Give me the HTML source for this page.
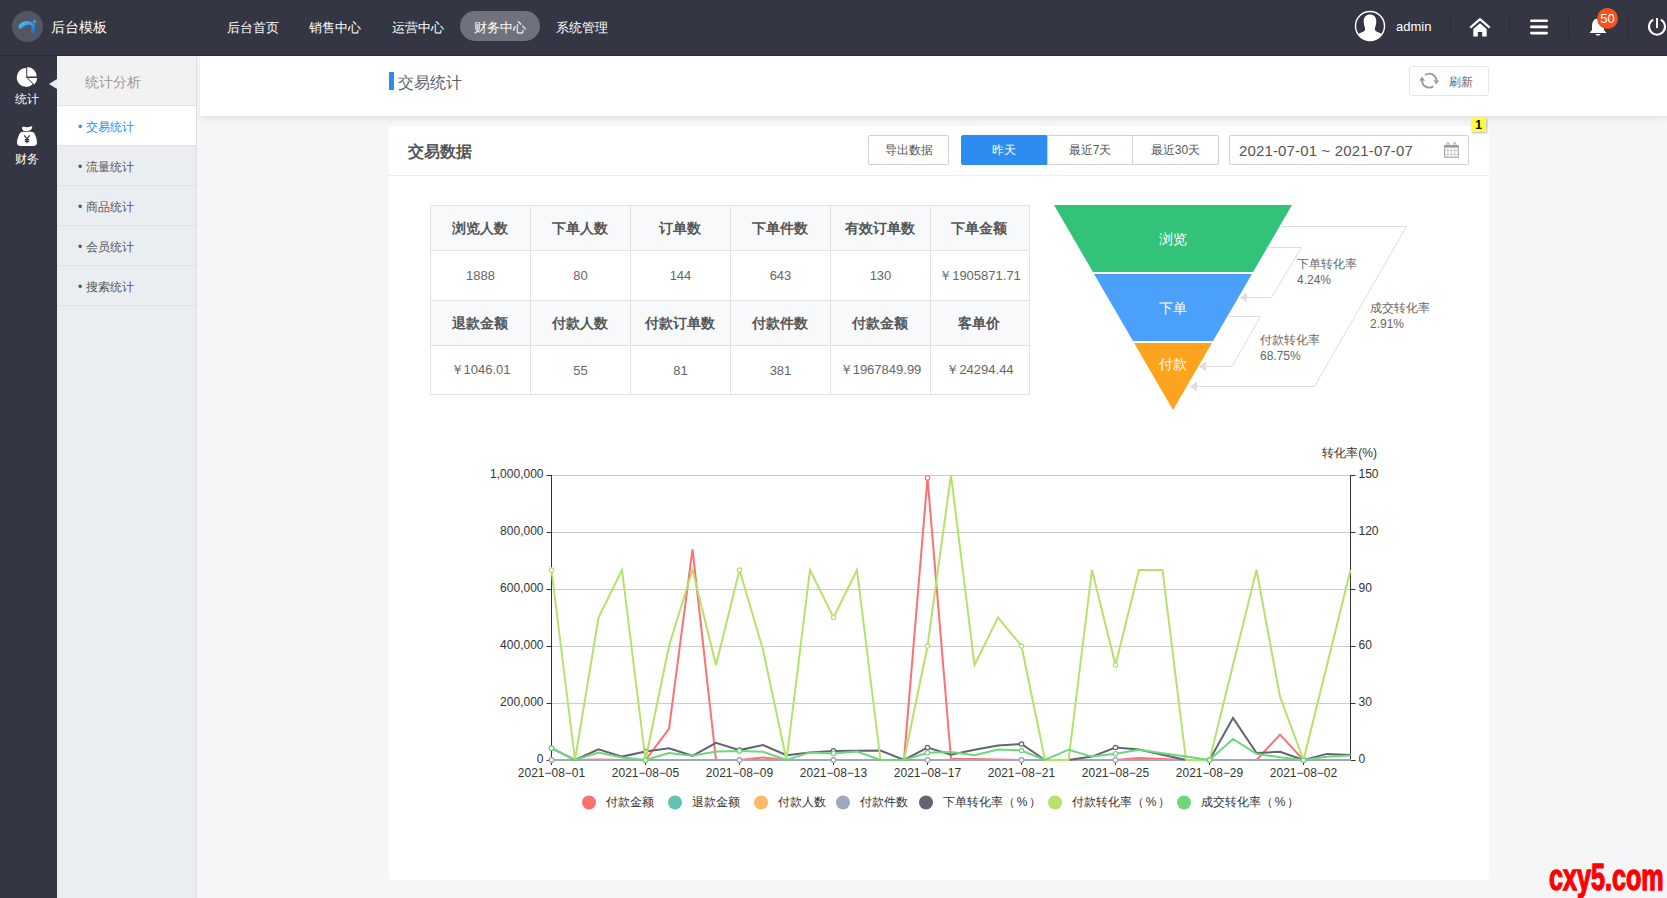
<!DOCTYPE html>
<html><head><meta charset="utf-8">
<style>
*{box-sizing:border-box;margin:0;padding:0}
html,body{width:1667px;height:898px;overflow:hidden}
body{font-family:"Liberation Sans",sans-serif;background:#f5f6f8;position:relative;color:#555}
.abs{position:absolute}
#top{left:0;top:0;width:1667px;height:56px;background:#343743;border-bottom:1px solid #2a2d37}
#logo{left:12px;top:11px;width:31px;height:31px;border-radius:50%;background:#535763}
#title{left:51px;top:18px;font-size:14px;color:#fff;line-height:18px}
.nav{top:13px;height:30px;width:80px;line-height:30px;text-align:center;font-size:13px;color:#fff;border-radius:15px}
.nav.on{background:#6f727c;top:11px;line-height:34px}
.sep{top:17px;width:1px;height:20px;background:#2a2d36}
#side{left:0;top:56px;width:57px;height:842px;background:#343743}
.sidet{left:0;width:54px;text-align:center;color:#fff;font-size:12px;line-height:14px}
#sub{left:57px;top:56px;width:140px;height:842px;background:#eaedf1;border-right:1px solid #e0e0e0}
#subh{left:0;top:0;width:139px;height:50px;background:#f2f2f2;border-bottom:1px solid #e3e3e3;color:#999;font-size:14px;line-height:52px;padding-left:28px}
.item{left:0;width:139px;height:40px;border-bottom:1px solid #e2e2e2;font-size:12px;line-height:42.5px;color:#555;padding-left:21px}
.item.on{background:#fff;color:#2d8cf0}
#hdr{left:200px;top:56px;width:1467px;height:60px;background:#fff;box-shadow:0 3px 6px rgba(0,0,0,.07)}
#card{left:389px;top:126px;width:1100px;height:754px;background:#fff;border-radius:3px}
.btn{height:30px;border:1px solid #d0d0d0;background:#fff;font-size:12px;color:#555;text-align:center;line-height:29px;border-radius:2px}
table{border-collapse:collapse;position:absolute;left:430px;top:205px;table-layout:fixed;width:600px}
td{width:100px;border:1px solid #e2e2e2;text-align:center;font-size:13px;color:#666}
tr.h td{height:45px;background:#f8f9fb;font-weight:bold;font-size:14px;color:#555;padding:2px 2px 0 0}
tr.d td{height:50px}
tr.last td{height:49px}
td:nth-child(6){width:99px}
svg{position:absolute;left:0;top:0}
</style></head><body>
<div id="top" class="abs">
  <div id="logo" class="abs"><svg width="31" height="31" viewBox="0 0 31 31" style="position:absolute"><defs><linearGradient id="lgb" x1="0" y1="0" x2="1" y2="1"><stop offset="0" stop-color="#5cc0ff"/><stop offset="1" stop-color="#0a6fe0"/></linearGradient></defs><path d="M7.1 14.4 C8 11.8 11.5 10.2 15.2 10.2 C18.5 10.2 21.5 11.5 22.8 14 C23.8 16.5 23 19.8 21.4 21.6 C20.5 22.5 18.6 21.8 18.7 20.6 C19 19 20.3 17 19.5 15.2 C18.6 13.6 16 13.2 13.5 14.4 C11 15.6 9.5 17.5 8 17.9 C6.8 18 6.3 15.5 7.1 14.4Z" fill="url(#lgb)"/><circle cx="22.5" cy="10.4" r="1.6" fill="#3aa2f5"/></svg></div>
  <div id="title" class="abs">后台模板</div>
  <div class="abs nav" style="left:213px">后台首页</div>
  <div class="abs nav" style="left:295px">销售中心</div>
  <div class="abs nav" style="left:378px">运营中心</div>
  <div class="abs nav on" style="left:460px">财务中心</div>
  <div class="abs nav" style="left:542px">系统管理</div>
  <!-- avatar -->
  <svg class="abs" style="left:1354px;top:10px" width="32" height="32" viewBox="0 0 32 32">
    <defs><clipPath id="cc"><circle cx="16" cy="16" r="14.8"/></clipPath></defs>
    <circle cx="16" cy="16" r="14.5" fill="none" stroke="#fff" stroke-width="1.4"/>
    <path clip-path="url(#cc)" fill="#fff" d="M16 4.4 C19.8 4.4 22.3 7 22.3 11 C22.3 14 21.5 16 21 18 C20.8 19.5 21 20.5 22 21.3 C24.5 22.5 27.5 23.5 30 25 L30 32 L2 32 L2 25 C4.5 23.5 7.5 22.5 10 21.3 C11 20.5 11.2 19.5 11 18 C10.5 16 9.7 14 9.7 11 C9.7 7 12.2 4.4 16 4.4Z"/>
  </svg>
  <div class="abs" style="left:1396px;top:19px;font-size:13px;color:#fff;line-height:16px">admin</div>
  <div class="abs sep" style="left:1450px"></div>
  <svg class="abs" style="left:1469px;top:17px" width="22" height="20" viewBox="0 0 22 20">
    <path d="M1.3 10.6 L11 2.2 L20.7 10.6" fill="none" stroke="#fff" stroke-width="2.2"/><path d="M4.3 12 L11 6.3 L17.7 12 L17.7 19.5 L13.2 19.5 L13.2 15 L8.8 15 L8.8 19.5 L4.3 19.5Z" fill="#fff"/>
  </svg>
  <div class="abs sep" style="left:1509px"></div>
  <svg class="abs" style="left:1529px;top:17px" width="20" height="20" viewBox="0 0 20 20"><rect x="1" y="2.5" width="18" height="2.6" rx="1.3" fill="#fff"/><rect x="1" y="8.6" width="18" height="2.6" rx="1.3" fill="#fff"/><rect x="1" y="14.8" width="18" height="2.6" rx="1.3" fill="#fff"/></svg>
  <div class="abs sep" style="left:1568px"></div>
  <svg class="abs" style="left:1588px;top:17px" width="20" height="20" viewBox="0 0 20 20">
    <path d="M10 1.5 C6 1.5 4 5 4 9 L4 13 L1.5 16 L18.5 16 L16 13 L16 9 C16 5 14 1.5 10 1.5Z" fill="#fff"/><path d="M7.5 17 C8 19 12 19 12.5 17Z" fill="#fff"/>
  </svg>
  <div class="abs" style="left:1597px;top:8px;width:21px;height:21px;border-radius:50%;background:#f4511e;color:#fff;font-size:13px;line-height:21px;text-align:center">50</div>
  <div class="abs sep" style="left:1627px"></div>
  <svg class="abs" style="left:1645px;top:15px" width="24" height="24" viewBox="0 0 24 24">
    <path d="M8.2 4.6 A8 8 0 1 0 15.8 4.6" fill="none" stroke="#fff" stroke-width="2"/><line x1="12" y1="3" x2="12" y2="13" stroke="#fff" stroke-width="2"/>
  </svg>
</div>
<div id="side" class="abs">
  <svg class="abs" style="left:0;top:0" width="57" height="110" viewBox="0 56 57 110">
    <path d="M26.2 77.4 L26.2 68 A9.4 9.4 0 1 0 32.8 84.1 Z" fill="#fff"/>
    <path d="M27.2 76.4 L27.2 67 A9.4 9.4 0 0 1 36.6 76.4 Z" fill="#fff"/>
    <path d="M27.8 78 L37.2 78 A9.4 9.4 0 0 1 34.4 84.4 Z" fill="#fff"/>
    <path d="M22.3 127 C24 126 26 127.5 27.5 127.3 C29.5 127 31 126 32.2 126.3 C32.5 128.5 31 130.6 28.5 130.9 L24.5 130.9 C22.5 130.8 21.8 128.5 22.3 127Z" fill="#fff"/>
    <path d="M23 131.8 L31.5 131.8 C33.5 131.8 34.3 133 35 134.5 C36.3 137.5 37 140 37 142.5 C37 144.8 35.8 145.9 33.5 145.9 L20.5 145.9 C18.2 145.9 17 144.8 17 142.5 C17 140 17.8 137.5 19.2 134.5 C20 133 21 131.8 23 131.8Z" fill="#fff"/>
    <path d="M24.3 135.3 L27 138.8 L29.7 135.3 M27 138.8 L27 143.3 M24.8 139.6 H29.2 M24.8 141.4 H29.2" fill="none" stroke="#343743" stroke-width="1.3"/>
  </svg>
  <div class="abs sidet" style="top:36px">统计</div>
  <div class="abs sidet" style="top:96px">财务</div>
  <div class="abs" style="left:49px;top:22.5px;width:0;height:0;border-top:5.5px solid transparent;border-bottom:5.5px solid transparent;border-right:8px solid #e8eaef"></div>
</div>
<div id="sub" class="abs">
  <div id="subh" class="abs">统计分析</div>
  <div class="abs item on" style="top:50px">• 交易统计</div>
  <div class="abs item" style="top:90px">• 流量统计</div>
  <div class="abs item" style="top:130px">• 商品统计</div>
  <div class="abs item" style="top:170px">• 会员统计</div>
  <div class="abs item" style="top:210px">• 搜索统计</div>
</div>
<div id="hdr" class="abs">
  <div class="abs" style="left:189px;top:16px;width:5px;height:18px;background:#2d8cf0"></div>
  <div class="abs" style="left:198px;top:17px;font-size:16px;line-height:20px;color:#5c6170">交易统计</div>
  <div class="abs" style="left:1209px;top:10px;width:80px;height:30px;border:1px solid #e6e6e6;border-radius:3px;background:#fff"></div>
  
  <div class="abs" style="left:1249px;top:19px;font-size:12px;line-height:14px;color:#666">刷新</div>
</div>
<div id="card" class="abs">
  <div class="abs" style="left:0;top:49px;width:1100px;height:1px;background:#eee"></div>
  <div class="abs" style="left:19px;top:16px;font-size:16px;font-weight:bold;line-height:20px;color:#555">交易数据</div>
  <div class="abs btn" style="left:479px;top:9px;width:81px">导出数据</div>
  <div class="abs btn" style="left:572px;top:9px;width:86px;background:#2d8cf0;border-color:#2d8cf0;color:#fff;border-radius:2px 0 0 2px">昨天</div>
  <div class="abs btn" style="left:658px;top:9px;width:86px;border-radius:0">最近7天</div>
  <div class="abs btn" style="left:743px;top:9px;width:87px;border-radius:0 2px 2px 0">最近30天</div>
  <div class="abs btn" style="left:840px;top:9px;width:240px;text-align:left;padding-left:9px;font-size:15px;color:#555;letter-spacing:0.15px">2021-07-01 ~ 2021-07-07</div>
  
  <div class="abs" style="left:1082px;top:-8px;width:15px;height:14px;background:#ffff3b;box-shadow:1px 1px 2px rgba(0,0,0,.3);font-size:12px;font-weight:bold;color:#000;text-align:center;line-height:14px">1</div>
</div>
<table>
<tr class="h"><td>浏览人数</td><td>下单人数</td><td>订单数</td><td>下单件数</td><td>有效订单数</td><td>下单金额</td></tr>
<tr class="d"><td>1888</td><td>80</td><td>144</td><td>643</td><td>130</td><td>￥1905871.71</td></tr>
<tr class="h"><td>退款金额</td><td>付款人数</td><td>付款订单数</td><td>付款件数</td><td>付款金额</td><td>客单价</td></tr>
<tr class="d last"><td>￥1046.01</td><td>55</td><td>81</td><td>381</td><td>￥1967849.99</td><td>￥24294.44</td></tr>
</table>
<svg width="1667" height="898" style="font-size:12px;fill:#333">

<polygon points="1054,205 1292,205 1253.1,272 1092.9,272" fill="#33c27a"/>
<polygon points="1094,274 1252,274 1213,341 1133,341" fill="#4aa0fa"/>
<polygon points="1134.1,343 1211.9,343 1173,410" fill="#fda41e"/>
<text x="1173" y="244" text-anchor="middle" fill="#fff" font-size="14">浏览</text>
<text x="1173" y="313" text-anchor="middle" fill="#fff" font-size="14">下单</text>
<text x="1173" y="369" text-anchor="middle" fill="#fff" font-size="14">付款</text>
<polyline points="1266.5,247.5 1301.5,247.5 1271.5,297.5 1245,297.5" fill="none" stroke="#ddd"/>
<polygon points="1240,297.5 1247,292.5 1247,302.5" fill="#ddd"/>
<polyline points="1228.5,316.5 1260.5,316.5 1232,366.5 1204,366.5" fill="none" stroke="#ddd"/>
<polygon points="1199,366.5 1206,361.5 1206,371.5" fill="#ddd"/>
<polyline points="1280.5,226.5 1406.5,226.5 1314.5,386.5 1195,386.5" fill="none" stroke="#ddd"/>
<polygon points="1190,386.5 1197,381.5 1197,391.5" fill="#ddd"/>
<g fill="#666" font-size="12">
<text x="1297" y="268">下单转化率</text><text x="1297" y="284">4.24%</text>
<text x="1370" y="312">成交转化率</text><text x="1370" y="328">2.91%</text>
<text x="1260" y="344">付款转化率</text><text x="1260" y="360">68.75%</text>
</g>

<g id="icons">
<path d="M1425.1 75 A7.1 7.1 0 0 1 1436.3 80.3" fill="none" stroke="#999" stroke-width="1.9"/>
<polygon points="1433.5,80.3 1439.1,80.3 1436.3,84.6" fill="#999"/>
<path d="M1433.4 86.2 A7.1 7.1 0 0 1 1422.1 80.7" fill="none" stroke="#999" stroke-width="1.9"/>
<polygon points="1419.3,80.7 1424.9,80.7 1422.1,76.4" fill="#999"/>
<rect x="1444.6" y="145.6" width="13.6" height="11.6" fill="none" stroke="#9a9a9a" stroke-width="1"/>
<rect x="1444.6" y="145.6" width="13.6" height="2" fill="#9a9a9a"/>
<path d="M1444.6 150.5 H1458.2 M1444.6 154.4 H1458.2 M1447.9 147.6 V157.2 M1451.4 147.6 V157.2 M1454.8 147.6 V157.2" stroke="#c8c8c8" stroke-width="0.9"/>
<ellipse cx="1447.9" cy="144.4" rx="1.1" ry="2" fill="none" stroke="#9a9a9a" stroke-width="0.9"/>
<ellipse cx="1454.8" cy="144.4" rx="1.1" ry="2" fill="none" stroke="#9a9a9a" stroke-width="0.9"/>
</g>

<line x1="551.5" x2="1350.5" y1="760.5" y2="760.5" stroke="#ccc" stroke-width="1"/>
<line x1="551.5" x2="1350.5" y1="703.5" y2="703.5" stroke="#ccc" stroke-width="1"/>
<line x1="551.5" x2="1350.5" y1="646.5" y2="646.5" stroke="#ccc" stroke-width="1"/>
<line x1="551.5" x2="1350.5" y1="589.5" y2="589.5" stroke="#ccc" stroke-width="1"/>
<line x1="551.5" x2="1350.5" y1="532.5" y2="532.5" stroke="#ccc" stroke-width="1"/>
<line x1="551.5" x2="1350.5" y1="475.5" y2="475.5" stroke="#ccc" stroke-width="1"/>
<line x1="551.5" x2="551.5" y1="475" y2="761" stroke="#333" stroke-width="1"/>
<line x1="1350.5" x2="1350.5" y1="475" y2="761" stroke="#333" stroke-width="1"/>
<line x1="546.5" x2="552.0" y1="760.5" y2="760.5" stroke="#333"/>
<line x1="1350.0" x2="1355.5" y1="760.5" y2="760.5" stroke="#333"/>
<line x1="546.5" x2="552.0" y1="703.5" y2="703.5" stroke="#333"/>
<line x1="1350.0" x2="1355.5" y1="703.5" y2="703.5" stroke="#333"/>
<line x1="546.5" x2="552.0" y1="646.5" y2="646.5" stroke="#333"/>
<line x1="1350.0" x2="1355.5" y1="646.5" y2="646.5" stroke="#333"/>
<line x1="546.5" x2="552.0" y1="589.5" y2="589.5" stroke="#333"/>
<line x1="1350.0" x2="1355.5" y1="589.5" y2="589.5" stroke="#333"/>
<line x1="546.5" x2="552.0" y1="532.5" y2="532.5" stroke="#333"/>
<line x1="1350.0" x2="1355.5" y1="532.5" y2="532.5" stroke="#333"/>
<line x1="546.5" x2="552.0" y1="475.5" y2="475.5" stroke="#333"/>
<line x1="1350.0" x2="1355.5" y1="475.5" y2="475.5" stroke="#333"/>
<line x1="551.5" x2="551.5" y1="760" y2="765" stroke="#333"/>
<line x1="645.5" x2="645.5" y1="760" y2="765" stroke="#333"/>
<line x1="739.5" x2="739.5" y1="760" y2="765" stroke="#333"/>
<line x1="833.5" x2="833.5" y1="760" y2="765" stroke="#333"/>
<line x1="927.5" x2="927.5" y1="760" y2="765" stroke="#333"/>
<line x1="1021.5" x2="1021.5" y1="760" y2="765" stroke="#333"/>
<line x1="1115.5" x2="1115.5" y1="760" y2="765" stroke="#333"/>
<line x1="1209.5" x2="1209.5" y1="760" y2="765" stroke="#333"/>
<line x1="1303.5" x2="1303.5" y1="760" y2="765" stroke="#333"/>
<text x="543.5" y="763.3" text-anchor="end">0</text>
<text x="1358.5" y="763.3">0</text>
<text x="543.5" y="706.3" text-anchor="end">200,000</text>
<text x="1358.5" y="706.3">30</text>
<text x="543.5" y="649.3" text-anchor="end">400,000</text>
<text x="1358.5" y="649.3">60</text>
<text x="543.5" y="592.3" text-anchor="end">600,000</text>
<text x="1358.5" y="592.3">90</text>
<text x="543.5" y="535.3" text-anchor="end">800,000</text>
<text x="1358.5" y="535.3">120</text>
<text x="543.5" y="478.3" text-anchor="end">1,000,000</text>
<text x="1358.5" y="478.3">150</text>
<text x="551.5" y="777" text-anchor="middle">2021−08−01</text>
<text x="645.5" y="777" text-anchor="middle">2021−08−05</text>
<text x="739.5" y="777" text-anchor="middle">2021−08−09</text>
<text x="833.5" y="777" text-anchor="middle">2021−08−13</text>
<text x="927.5" y="777" text-anchor="middle">2021−08−17</text>
<text x="1021.5" y="777" text-anchor="middle">2021−08−21</text>
<text x="1115.5" y="777" text-anchor="middle">2021−08−25</text>
<text x="1209.5" y="777" text-anchor="middle">2021−08−29</text>
<text x="1303.5" y="777" text-anchor="middle">2021−08−02</text>
<text x="1377" y="457" text-anchor="end">转化率(%)</text>
<polyline points="551.5,760.0 575.0,760.0 598.5,759.4 622.0,760.0 645.5,760.0 669.0,728.9 692.5,549.4 716.0,760.0 739.5,760.0 763.0,757.4 786.5,760.0 810.0,760.0 833.5,760.0 857.0,760.0 880.5,760.0 904.0,760.0 927.5,477.9 951.0,759.1 974.5,759.1 998.0,759.4 1021.5,760.0 1045.0,760.0 1068.5,760.0 1092.0,760.0 1115.5,760.0 1139.0,758.0 1162.5,759.1 1186.0,760.0 1209.5,760.0 1233.0,760.0 1256.5,760.0 1280.0,734.6 1303.5,760.0 1327.0,760.0 1350.5,760.0" fill="none" stroke="#ff7070" stroke-width="2" stroke-linejoin="miter"/>
<circle cx="551.5" cy="760.0" r="2.2" fill="#fff" stroke="#ff7070" stroke-width="1.2"/>
<circle cx="645.5" cy="760.0" r="2.2" fill="#fff" stroke="#ff7070" stroke-width="1.2"/>
<circle cx="739.5" cy="760.0" r="2.2" fill="#fff" stroke="#ff7070" stroke-width="1.2"/>
<circle cx="833.5" cy="760.0" r="2.2" fill="#fff" stroke="#ff7070" stroke-width="1.2"/>
<circle cx="927.5" cy="477.9" r="2.2" fill="#fff" stroke="#ff7070" stroke-width="1.2"/>
<circle cx="1021.5" cy="760.0" r="2.2" fill="#fff" stroke="#ff7070" stroke-width="1.2"/>
<circle cx="1115.5" cy="760.0" r="2.2" fill="#fff" stroke="#ff7070" stroke-width="1.2"/>
<circle cx="1209.5" cy="760.0" r="2.2" fill="#fff" stroke="#ff7070" stroke-width="1.2"/>
<circle cx="1303.5" cy="760.0" r="2.2" fill="#fff" stroke="#ff7070" stroke-width="1.2"/>
<polyline points="551.5,760.0 575.0,760.0 598.5,760.0 622.0,760.0 645.5,760.0 669.0,760.0 692.5,760.0 716.0,760.0 739.5,760.0 763.0,760.0 786.5,760.0 810.0,760.0 833.5,760.0 857.0,760.0 880.5,760.0 904.0,760.0 927.5,760.0 951.0,760.0 974.5,760.0 998.0,760.0 1021.5,760.0 1045.0,760.0 1068.5,760.0 1092.0,760.0 1115.5,760.0 1139.0,760.0 1162.5,760.0 1186.0,760.0 1209.5,760.0 1233.0,760.0 1256.5,760.0 1280.0,760.0 1303.5,760.0 1327.0,760.0 1350.5,760.0" fill="none" stroke="#65c1b2" stroke-width="2" stroke-linejoin="miter"/>
<circle cx="551.5" cy="760.0" r="2.2" fill="#fff" stroke="#65c1b2" stroke-width="1.2"/>
<circle cx="645.5" cy="760.0" r="2.2" fill="#fff" stroke="#65c1b2" stroke-width="1.2"/>
<circle cx="739.5" cy="760.0" r="2.2" fill="#fff" stroke="#65c1b2" stroke-width="1.2"/>
<circle cx="833.5" cy="760.0" r="2.2" fill="#fff" stroke="#65c1b2" stroke-width="1.2"/>
<circle cx="927.5" cy="760.0" r="2.2" fill="#fff" stroke="#65c1b2" stroke-width="1.2"/>
<circle cx="1021.5" cy="760.0" r="2.2" fill="#fff" stroke="#65c1b2" stroke-width="1.2"/>
<circle cx="1115.5" cy="760.0" r="2.2" fill="#fff" stroke="#65c1b2" stroke-width="1.2"/>
<circle cx="1209.5" cy="760.0" r="2.2" fill="#fff" stroke="#65c1b2" stroke-width="1.2"/>
<circle cx="1303.5" cy="760.0" r="2.2" fill="#fff" stroke="#65c1b2" stroke-width="1.2"/>
<polyline points="551.5,760.0 575.0,760.0 598.5,760.0 622.0,760.0 645.5,760.0 669.0,760.0 692.5,760.0 716.0,760.0 739.5,760.0 763.0,760.0 786.5,760.0 810.0,760.0 833.5,760.0 857.0,760.0 880.5,760.0 904.0,760.0 927.5,760.0 951.0,760.0 974.5,760.0 998.0,760.0 1021.5,760.0 1045.0,760.0 1068.5,760.0 1092.0,760.0 1115.5,760.0 1139.0,760.0 1162.5,760.0 1186.0,760.0 1209.5,760.0 1233.0,760.0 1256.5,760.0 1280.0,760.0 1303.5,760.0 1327.0,760.0 1350.5,760.0" fill="none" stroke="#ffb86c" stroke-width="2" stroke-linejoin="miter"/>
<circle cx="551.5" cy="760.0" r="2.2" fill="#fff" stroke="#ffb86c" stroke-width="1.2"/>
<circle cx="645.5" cy="760.0" r="2.2" fill="#fff" stroke="#ffb86c" stroke-width="1.2"/>
<circle cx="739.5" cy="760.0" r="2.2" fill="#fff" stroke="#ffb86c" stroke-width="1.2"/>
<circle cx="833.5" cy="760.0" r="2.2" fill="#fff" stroke="#ffb86c" stroke-width="1.2"/>
<circle cx="927.5" cy="760.0" r="2.2" fill="#fff" stroke="#ffb86c" stroke-width="1.2"/>
<circle cx="1021.5" cy="760.0" r="2.2" fill="#fff" stroke="#ffb86c" stroke-width="1.2"/>
<circle cx="1115.5" cy="760.0" r="2.2" fill="#fff" stroke="#ffb86c" stroke-width="1.2"/>
<circle cx="1209.5" cy="760.0" r="2.2" fill="#fff" stroke="#ffb86c" stroke-width="1.2"/>
<circle cx="1303.5" cy="760.0" r="2.2" fill="#fff" stroke="#ffb86c" stroke-width="1.2"/>
<polyline points="551.5,760.0 575.0,760.0 598.5,760.0 622.0,760.0 645.5,760.0 669.0,760.0 692.5,760.0 716.0,760.0 739.5,760.0 763.0,760.0 786.5,760.0 810.0,760.0 833.5,760.0 857.0,760.0 880.5,760.0 904.0,760.0 927.5,760.0 951.0,760.0 974.5,760.0 998.0,760.0 1021.5,760.0 1045.0,760.0 1068.5,760.0 1092.0,760.0 1115.5,760.0 1139.0,760.0 1162.5,760.0 1186.0,760.0 1209.5,760.0 1233.0,760.0 1256.5,760.0 1280.0,760.0 1303.5,760.0 1327.0,760.0 1350.5,760.0" fill="none" stroke="#a0a8bd" stroke-width="2" stroke-linejoin="miter"/>
<circle cx="551.5" cy="760.0" r="2.2" fill="#fff" stroke="#a0a8bd" stroke-width="1.2"/>
<circle cx="645.5" cy="760.0" r="2.2" fill="#fff" stroke="#a0a8bd" stroke-width="1.2"/>
<circle cx="739.5" cy="760.0" r="2.2" fill="#fff" stroke="#a0a8bd" stroke-width="1.2"/>
<circle cx="833.5" cy="760.0" r="2.2" fill="#fff" stroke="#a0a8bd" stroke-width="1.2"/>
<circle cx="927.5" cy="760.0" r="2.2" fill="#fff" stroke="#a0a8bd" stroke-width="1.2"/>
<circle cx="1021.5" cy="760.0" r="2.2" fill="#fff" stroke="#a0a8bd" stroke-width="1.2"/>
<circle cx="1115.5" cy="760.0" r="2.2" fill="#fff" stroke="#a0a8bd" stroke-width="1.2"/>
<circle cx="1209.5" cy="760.0" r="2.2" fill="#fff" stroke="#a0a8bd" stroke-width="1.2"/>
<circle cx="1303.5" cy="760.0" r="2.2" fill="#fff" stroke="#a0a8bd" stroke-width="1.2"/>
<polyline points="551.5,748.2 575.0,760.0 598.5,749.4 622.0,756.6 645.5,751.6 669.0,748.2 692.5,755.8 716.0,742.9 739.5,750.1 763.0,745.0 786.5,755.2 810.0,752.4 833.5,750.9 857.0,750.7 880.5,750.5 904.0,760.0 927.5,747.5 951.0,754.7 974.5,749.7 998.0,745.6 1021.5,744.0 1045.0,760.0 1068.5,760.0 1092.0,756.6 1115.5,747.5 1139.0,749.4 1162.5,754.7 1186.0,760.0 1209.5,760.0 1233.0,718.0 1256.5,753.0 1280.0,751.8 1303.5,760.0 1327.0,753.9 1350.5,754.9" fill="none" stroke="#606572" stroke-width="2" stroke-linejoin="miter"/>
<circle cx="551.5" cy="748.2" r="2.2" fill="#fff" stroke="#606572" stroke-width="1.2"/>
<circle cx="645.5" cy="751.6" r="2.2" fill="#fff" stroke="#606572" stroke-width="1.2"/>
<circle cx="739.5" cy="750.1" r="2.2" fill="#fff" stroke="#606572" stroke-width="1.2"/>
<circle cx="833.5" cy="750.9" r="2.2" fill="#fff" stroke="#606572" stroke-width="1.2"/>
<circle cx="927.5" cy="747.5" r="2.2" fill="#fff" stroke="#606572" stroke-width="1.2"/>
<circle cx="1021.5" cy="744.0" r="2.2" fill="#fff" stroke="#606572" stroke-width="1.2"/>
<circle cx="1115.5" cy="747.5" r="2.2" fill="#fff" stroke="#606572" stroke-width="1.2"/>
<circle cx="1209.5" cy="760.0" r="2.2" fill="#fff" stroke="#606572" stroke-width="1.2"/>
<circle cx="1303.5" cy="760.0" r="2.2" fill="#fff" stroke="#606572" stroke-width="1.2"/>
<polyline points="551.5,570.0 575.0,760.0 598.5,617.5 622.0,570.0 645.5,760.0 669.0,646.0 692.5,570.0 716.0,665.0 739.5,570.0 763.0,649.8 786.5,760.0 810.0,570.0 833.5,617.5 857.0,570.0 880.5,760.0 904.0,760.0 927.5,646.0 951.0,475.0 974.5,665.0 998.0,617.5 1021.5,646.0 1045.0,760.0 1068.5,760.0 1092.0,570.0 1115.5,665.0 1139.0,570.0 1162.5,570.0 1186.0,760.0 1209.5,760.0 1233.0,665.0 1256.5,570.0 1280.0,696.7 1303.5,760.0 1327.0,665.0 1350.5,570.0" fill="none" stroke="#b5e26a" stroke-width="2" stroke-linejoin="miter"/>
<circle cx="551.5" cy="570.0" r="2.2" fill="#fff" stroke="#b5e26a" stroke-width="1.2"/>
<circle cx="645.5" cy="760.0" r="2.2" fill="#fff" stroke="#b5e26a" stroke-width="1.2"/>
<circle cx="739.5" cy="570.0" r="2.2" fill="#fff" stroke="#b5e26a" stroke-width="1.2"/>
<circle cx="833.5" cy="617.5" r="2.2" fill="#fff" stroke="#b5e26a" stroke-width="1.2"/>
<circle cx="927.5" cy="646.0" r="2.2" fill="#fff" stroke="#b5e26a" stroke-width="1.2"/>
<circle cx="1021.5" cy="646.0" r="2.2" fill="#fff" stroke="#b5e26a" stroke-width="1.2"/>
<circle cx="1115.5" cy="665.0" r="2.2" fill="#fff" stroke="#b5e26a" stroke-width="1.2"/>
<circle cx="1209.5" cy="760.0" r="2.2" fill="#fff" stroke="#b5e26a" stroke-width="1.2"/>
<circle cx="1303.5" cy="760.0" r="2.2" fill="#fff" stroke="#b5e26a" stroke-width="1.2"/>
<polyline points="551.5,748.2 575.0,760.0 598.5,752.6 622.0,757.5 645.5,760.0 669.0,753.0 692.5,755.8 716.0,751.5 739.5,750.9 763.0,751.8 786.5,760.0 810.0,752.4 833.5,753.4 857.0,751.5 880.5,760.0 904.0,760.0 927.5,752.8 951.0,752.0 974.5,755.2 998.0,749.5 1021.5,750.5 1045.0,760.0 1068.5,749.7 1092.0,756.6 1115.5,753.7 1139.0,749.7 1162.5,753.2 1186.0,756.6 1209.5,760.0 1233.0,738.9 1256.5,753.9 1280.0,757.3 1303.5,760.0 1327.0,756.8 1350.5,755.6" fill="none" stroke="#6fd67b" stroke-width="2" stroke-linejoin="miter"/>
<circle cx="551.5" cy="748.2" r="2.2" fill="#fff" stroke="#6fd67b" stroke-width="1.2"/>
<circle cx="645.5" cy="760.0" r="2.2" fill="#fff" stroke="#6fd67b" stroke-width="1.2"/>
<circle cx="739.5" cy="750.9" r="2.2" fill="#fff" stroke="#6fd67b" stroke-width="1.2"/>
<circle cx="833.5" cy="753.4" r="2.2" fill="#fff" stroke="#6fd67b" stroke-width="1.2"/>
<circle cx="927.5" cy="752.8" r="2.2" fill="#fff" stroke="#6fd67b" stroke-width="1.2"/>
<circle cx="1021.5" cy="750.5" r="2.2" fill="#fff" stroke="#6fd67b" stroke-width="1.2"/>
<circle cx="1115.5" cy="753.7" r="2.2" fill="#fff" stroke="#6fd67b" stroke-width="1.2"/>
<circle cx="1209.5" cy="760.0" r="2.2" fill="#fff" stroke="#6fd67b" stroke-width="1.2"/>
<circle cx="1303.5" cy="760.0" r="2.2" fill="#fff" stroke="#6fd67b" stroke-width="1.2"/>
<circle cx="589" cy="802.5" r="7" fill="#ff7070"/>
<text x="606" y="806" word-spacing="-1.5">付款金额</text>
<circle cx="675" cy="802.5" r="7" fill="#65c1b2"/>
<text x="692" y="806" word-spacing="-1.5">退款金额</text>
<circle cx="761" cy="802.5" r="7" fill="#ffb86c"/>
<text x="778" y="806" word-spacing="-1.5">付款人数</text>
<circle cx="843" cy="802.5" r="7" fill="#a0a8bd"/>
<text x="860" y="806" word-spacing="-1.5">付款件数</text>
<circle cx="926" cy="802.5" r="7" fill="#606572"/>
<text x="943" y="806" word-spacing="-1.5">下单转化率（ % ）</text>
<circle cx="1055" cy="802.5" r="7" fill="#b5e26a"/>
<text x="1072" y="806" word-spacing="-1.5">付款转化率（ % ）</text>
<circle cx="1184" cy="802.5" r="7" fill="#6fd67b"/>
<text x="1201" y="806" word-spacing="-1.5">成交转化率（ % ）</text>
</svg>
<div class="abs" style="left:1549px;top:855.5px;font-size:37px;line-height:44px;font-weight:bold;color:#ff0000;-webkit-text-stroke:1.4px #ff0000;transform:scaleX(0.68);transform-origin:0 0;white-space:nowrap">cxy5.com</div>
</body></html>
